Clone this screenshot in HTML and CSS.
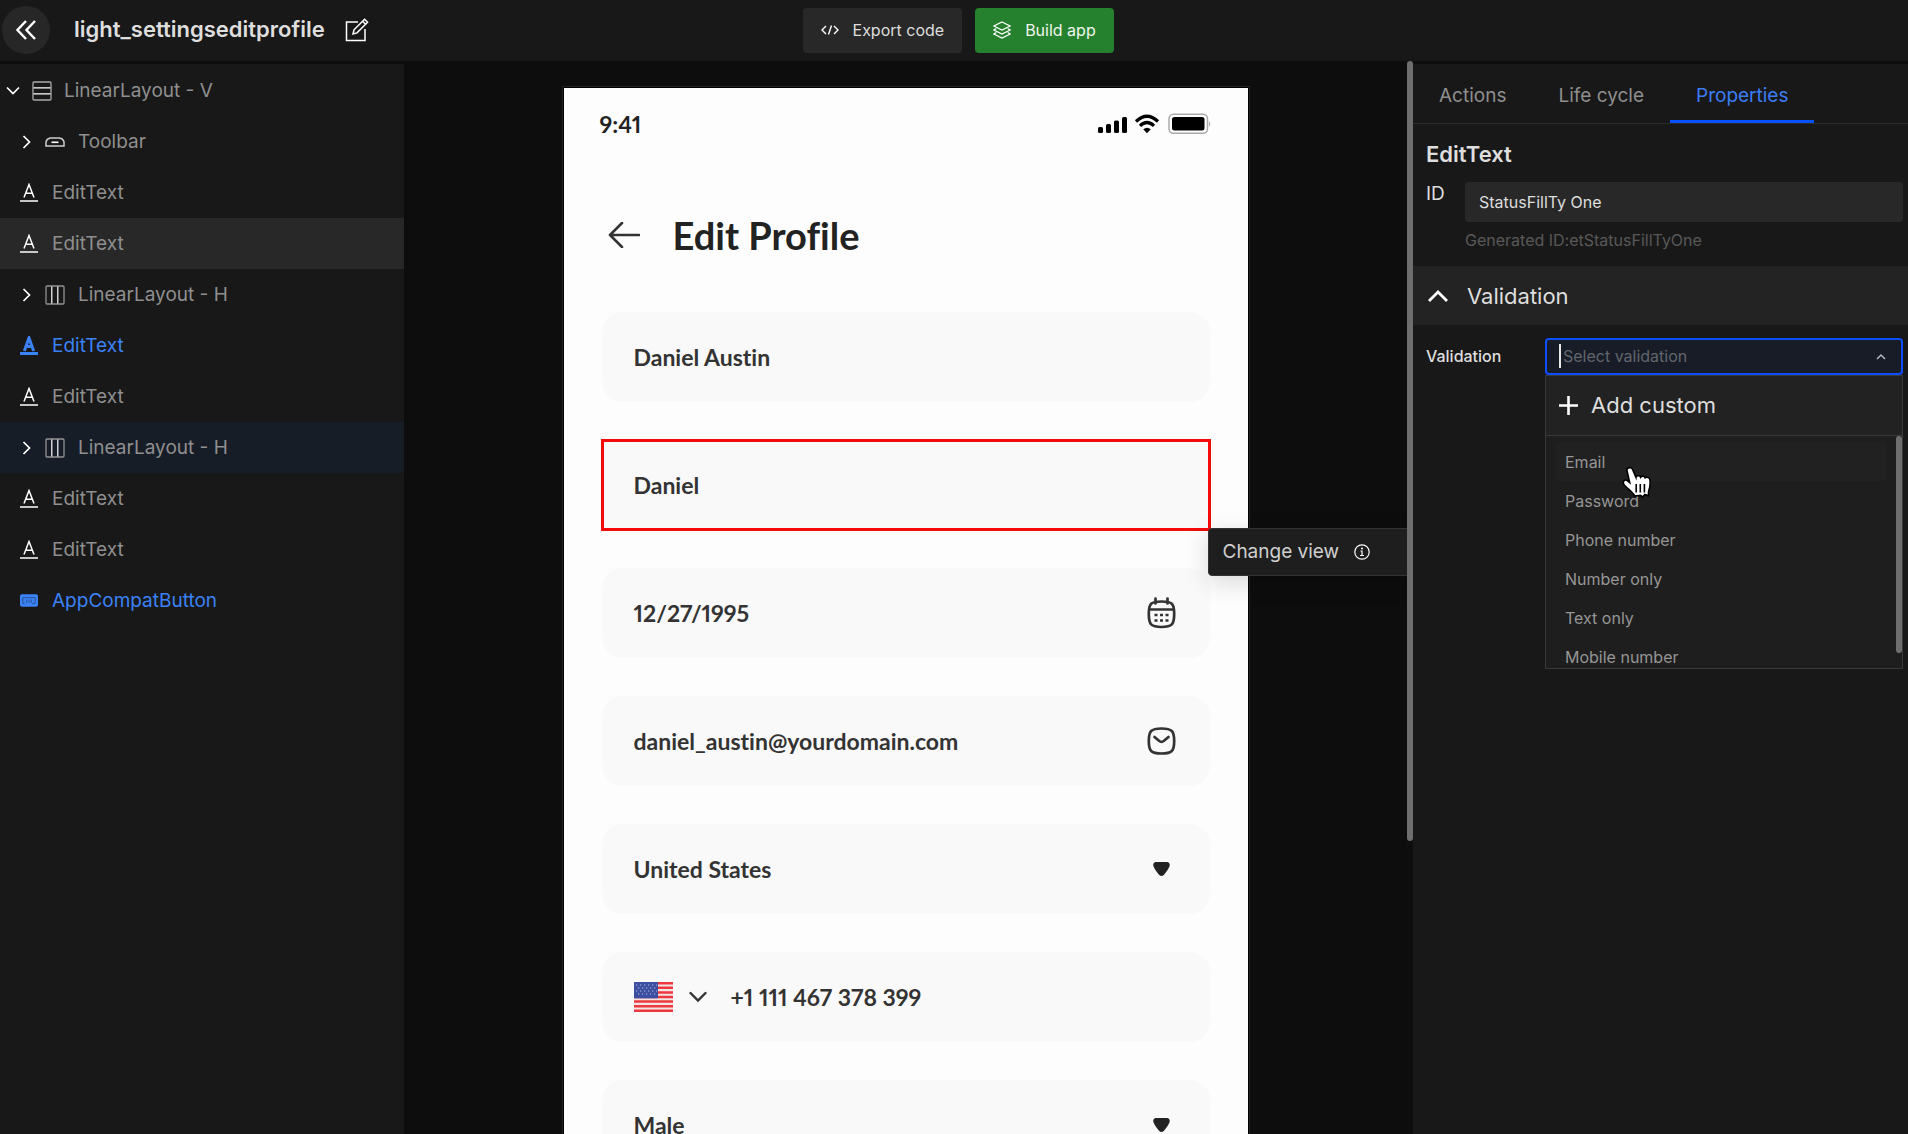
FILE: index.html
```html
<!DOCTYPE html>
<html lang="en">
<head>
<meta charset="utf-8">
<meta name="viewport" content="width=device-width, initial-scale=1">
<title>light_settingseditprofile</title>
<link rel="stylesheet" href="styles.css">
</head>
<body class="app">
<svg class="sprite" width="0" height="0" aria-hidden="true">
  <symbol id="i-text" viewBox="0 0 18 20"><path d="M4 14.500 9 1.500l5 13M5.800 10.200h6.400" fill="none" stroke="currentColor" stroke-width="1.500"/><path d="M0 18h18" stroke="currentColor" stroke-width="1.500"/></symbol>
  <symbol id="i-text-bold" viewBox="0 0 18 20"><path d="M4.300 15 9 2l4.700 13M6 10.500h6" fill="none" stroke="currentColor" stroke-width="3"/><path d="M0 17.500h19" stroke="currentColor" stroke-width="3"/></symbol>
  <symbol id="i-cols" viewBox="0 0 20 20"><rect x="1" y="1" width="18" height="18" rx="1" fill="none" stroke="#929292" stroke-width="1.300"/><path d="M6.800 1.500v17M12.800 1.500v17" stroke="#fff" stroke-width="1.200"/></symbol>
  <symbol id="i-right" viewBox="0 0 10 14"><path d="M1.500 1 7.500 7l-6 6" fill="none" stroke="#fff" stroke-width="1.700"/></symbol>
  <symbol id="i-triangle" viewBox="0 0 17 14"><path d="M3 0h11c2.400 0 3.300 2.600 2.400 4.600-1.300 3-3.200 5.800-5.400 8.200-1.500 1.600-3.500 1.600-5 0C3.800 10.400 1.900 7.600.6 4.600-.3 2.600.6 0 3 0Z" fill="#222"/></symbol>
</svg>

<header class="topbar">
  <div class="topbar-left">
    <button class="back" aria-label="Back"><svg width="20" height="20" viewBox="0 0 20 20"><path d="M10 1 1.500 10l8.500 9M19 1l-8.500 9 8.500 9" fill="none" stroke="#fff" stroke-width="2.400"/></svg></button>
    <h1 class="title">light_settingseditprofile</h1>
    <button class="plain" aria-label="Rename"><svg width="24" height="24" viewBox="0 0 24 24" fill="none" stroke="#fff" stroke-width="1.500"><path d="M13 4H1.500v18.500H20V11"/><path d="m8 16 1-4.200L19.600 1.200l3 3L12 14.900 8 16ZM17.600 3.200l3 3"/></svg></button>
  </div>
  <div class="topbar-actions">
    <button class="btn"><svg width="18" height="18" viewBox="0 0 18 18" fill="none" stroke="#fff" stroke-width="1.400"><path d="M5 5 1 9l4 4M13 5l4 4-4 4M10.500 4.500l-3 9"/></svg>Export code</button>
    <button class="btn btn-primary"><svg width="18" height="18" viewBox="0 0 18 18" fill="none" stroke="#fff" stroke-width="1.300"><path d="M9 1 17.200 5 9 9 .8 5 9 1Z"/><path d="M3.300 7.500.8 9 9 13l8.200-4-2.500-1.500M3.300 11.500.8 13 9 17l8.200-4-2.500-1.500"/></svg>Build app</button>
  </div>
</header>

<main class="workspace">
  <nav class="sidebar" aria-label="Layers">
    <ul class="tree">
      <li><button class="node root"><svg width="14" height="10" viewBox="0 0 14 10"><path d="m1 1.500 6 6 6-6" fill="none" stroke="#fff" stroke-width="1.700"/></svg><svg width="20" height="20" viewBox="0 0 20 20"><rect x="1" y="1" width="18" height="18" rx="1" fill="none" stroke="#aaa" stroke-width="1.300"/><path d="M1.500 6.800h17M1.500 12.800h17" stroke="#fff" stroke-width="1.200"/></svg>LinearLayout - V</button></li>
      <li><button class="node branch"><svg width="10" height="14"><use href="#i-right"/></svg><svg width="20" height="10" viewBox="0 0 20 10"><path d="M1 9h18V4.800Q18 1.500 14.500 1h-9Q2 1.500 1 4.800Z" fill="none" stroke="#ccc" stroke-width="1.500"/><path d="M6.500 5.300h7" stroke="#fff" stroke-width="1.600"/></svg>Toolbar</button></li>
      <li><button class="node leaf"><svg width="18" height="20"><use href="#i-text"/></svg>EditText</button></li>
      <li><button class="node leaf hovered"><svg width="18" height="20"><use href="#i-text"/></svg>EditText</button></li>
      <li><button class="node branch"><svg width="10" height="14"><use href="#i-right"/></svg><svg width="20" height="20"><use href="#i-cols"/></svg>LinearLayout - H</button></li>
      <li><button class="node leaf linked"><svg width="18" height="20"><use href="#i-text-bold"/></svg>EditText</button></li>
      <li><button class="node leaf"><svg width="18" height="20"><use href="#i-text"/></svg>EditText</button></li>
      <li><button class="node branch active"><svg width="10" height="14"><use href="#i-right"/></svg><svg width="20" height="20"><use href="#i-cols"/></svg>LinearLayout - H</button></li>
      <li><button class="node leaf"><svg width="18" height="20"><use href="#i-text"/></svg>EditText</button></li>
      <li><button class="node leaf"><svg width="18" height="20"><use href="#i-text"/></svg>EditText</button></li>
      <li><button class="node leaf linked"><svg width="18" height="13" viewBox="0 0 19 13"><rect width="19" height="13" rx="2" fill="#3b82f6"/><path d="M3 9.500v-6h13v6h-3M3 9.500h2M7 9V5.500M9.500 9V5.500M12 9V5.500" fill="none" stroke="#27508f"/></svg>AppCompatButton</button></li>
    </ul>
  </nav>

  <section class="canvas" aria-label="Preview">
    <div class="stage">
      <div class="phone">
        <div class="statusbar">
          <span class="clock">9:41</span>
          <svg width="114" height="22" viewBox="0 0 114 22">
            <rect x="0" y="14" width="5" height="6" rx="1.500"/><rect x="8" y="11" width="5" height="9" rx="1.500"/><rect x="16" y="7.500" width="5" height="12.500" rx="1.500"/><rect x="24" y="4" width="5" height="16" rx="1.500"/>
            <g fill="none" stroke="#000" stroke-width="3.200"><path d="M38 8.500q11-10.500 22 0M42 12.800q7-6.500 14 0"/></g><path d="M45.200 16.200q3.800-3 7.600 0L49 20.200Z"/>
            <rect x="71" y="1.200" width="38.500" height="19" rx="4.500" fill="none" stroke="#aaa" stroke-width="1.500"/><rect x="74" y="4" width="32.500" height="13.600" rx="2.500"/><path d="M111 8q2.500 3 0 6Z" fill="#aaa"/>
          </svg>
        </div>
        <div class="phone-head">
          <svg width="32" height="26" viewBox="0 0 32 26"><path d="M31 13H2M14 1 2 13l12 12" fill="none" stroke="#333" stroke-width="2.600" stroke-linecap="round" stroke-linejoin="round"/></svg>
          <h2 class="phone-title">Edit Profile</h2>
        </div>
        <div class="form">
          <div class="card"><span>Daniel Austin</span></div>
          <div class="card selected"><span>Daniel</span>
            <button class="tooltip">Change view<svg width="16" height="16" viewBox="0 0 16 16"><circle cx="8" cy="8" r="7.200" fill="none" stroke="#fff" stroke-width="1.200"/><path d="M6.500 7H8v4.500M6 11.500h4" fill="none" stroke="#fff" stroke-width="1.200"/><circle cx="8" cy="4.500" r="1" fill="#fff"/></svg></button>
          </div>
          <div class="card"><span>12/27/1995</span>
            <svg width="29" height="32" viewBox="0 0 29 32" fill="none" stroke="#333" stroke-width="2.700"><path d="M1.800 17C1.800 6.500 4 4.500 14.500 4.500S27.200 6.500 27.200 17 25 30 14.500 30 1.800 27.500 1.800 17ZM2.500 12.500h24"/><path d="M8.500 1.500v5M20.500 1.500v5" stroke-linecap="round"/><path d="M7.500 18h3M13 18h3M18.500 18h3M7.500 23.500h3M13 23.500h3M18.500 23.500h3"/></svg></div>
          <div class="card"><span>daniel_austin@yourdomain.com</span>
            <svg width="29" height="28" viewBox="0 0 29 28" fill="none" stroke="#333" stroke-width="2.700" stroke-linecap="round"><path d="M1.800 14C1.800 4 4 1.500 14.500 1.500S27.200 4 27.200 14 25 26.500 14.500 26.500 1.800 24 1.800 14Z"/><path d="m7.500 10 4.800 4q2.200 1.600 4.400 0l4.800-4"/></svg></div>
          <div class="card"><span>United States</span><svg class="caret-down" width="17" height="14"><use href="#i-triangle"/></svg></div>
          <div class="card phone-number">
            <svg width="39" height="30" viewBox="0 0 39 30"><rect width="39" height="30" fill="#f3e4e6"/><path d="M0 1.200h39M0 5.800h39M0 10.400h39M0 15h39M0 19.600h39M0 24.200h39M0 28.800h39" stroke="#ee3840" stroke-width="2.500"/><rect width="24" height="16.300" fill="#3d4fa0"/><path d="M2 3h21M4 6h19M2 9h21M4 12h19" stroke="#b4bce0" stroke-dasharray="1.300 2.700"/></svg>
            <svg width="18" height="12" viewBox="0 0 18 12"><path d="m1.500 2 7.500 7.500L16.500 2" fill="none" stroke="#333" stroke-width="2.400" stroke-linecap="round"/></svg>
            <span>+1 111 467 378 399</span></div>
          <div class="card"><span>Male</span><svg class="caret-down" width="17" height="14"><use href="#i-triangle"/></svg></div>
        </div>
      </div>
    </div>
    <div class="scroll-track"><div class="scroll-thumb"></div></div>
  </section>

  <aside class="panel">
    <div class="tabs" role="tablist">
      <button class="tab" role="tab">Actions</button>
      <button class="tab" role="tab">Life cycle</button>
      <button class="tab current" role="tab" aria-selected="true">Properties</button>
    </div>
    <section class="identity">
      <h2 class="panel-title">EditText</h2>
      <div class="id-row">
        <label class="id-label" for="view-id">ID</label>
        <div class="id-field">
          <input class="id-input" id="view-id" type="text" value="StatusFillTy One">
          <p class="hint">Generated ID:etStatusFillTyOne</p>
        </div>
      </div>
    </section>
    <button class="section-head" aria-expanded="true"><svg width="20" height="12" viewBox="0 0 20 12"><path d="m1 11 9-9 9 9" fill="none" stroke="#fff" stroke-width="2.800"/></svg>Validation</button>
    <div class="validation-row">
      <label class="validation-label" for="validation">Validation</label>
      <div class="combo">
        <input class="combo-input" id="validation" type="text" role="combobox" aria-expanded="true" aria-controls="options" placeholder="Select validation">
        <span class="combo-caret"></span>
        <svg class="combo-arrow" width="10" height="7" viewBox="0 0 10 7"><path d="m1 6 4-4 4 4" fill="none" stroke="#b4b8be" stroke-width="1.500"/></svg>
        <div class="menu">
          <button class="add"><svg width="19" height="19" viewBox="0 0 19 19"><path d="M9.500 0v19M0 9.500h19" stroke="#fff" stroke-width="2.600"/></svg>Add custom</button>
          <div class="menu-body">
            <ul class="options" id="options" role="listbox">
              <li class="option focused" role="option">Email</li>
              <li class="option" role="option">Password</li>
              <li class="option" role="option">Phone number</li>
              <li class="option" role="option">Number only</li>
              <li class="option" role="option">Text only</li>
              <li class="option" role="option">Mobile number</li>
            </ul>
            <div class="menu-thumb"></div>
          </div>
          <svg class="pointer" width="30" height="34" viewBox="0 0 30 34"><path d="M6.500 2C8.300 1 10 2 10.700 3.800L14 11.500c.3-2.400 3.800-2.600 4.600-.3 1.200-1.700 3.900-1.400 4.500.6 1.900-1.200 4.700 0 4.900 2.300.4 4.300.2 7.700-1.500 11.400v4.300l-3.600-1.400-2.300 2.700-1.900-1.700-5.900.6c-2.500-4.200-6.500-6.700-10.300-10.700-2.600-3-.4-6.200 2.500-4.900l2.700 2.200L5 4.800C4.700 3.600 5.300 2.500 6.500 2Z" fill="#fff" stroke="#000" stroke-width="1.600"/><path d="M14.200 18v8.500M18.300 18v8.500M22.400 18v8.500" stroke="#000" stroke-width="1.600"/></svg>
        </div>
      </div>
    </div>
  </aside>
</main>
</body>
</html>
```

FILE: styles.css
```css
* { box-sizing: border-box; }

.app {
  display: flex;
  flex-direction: column;
  height: 100vh;
  margin: 0;
  overflow: hidden;
  background: #0e0e0e;
  color: #dedede;
  font: 16px/24px Inter, "Liberation Sans", sans-serif;
}

.sprite { position: absolute; }
svg { flex: none; display: block; }
h1, h2, p, ul { margin: 0; padding: 0; }
ul { list-style: none; }

button {
  margin: 0;
  padding: 0;
  border: 0;
  background: none;
  color: inherit;
  font: inherit;
}

input { font: inherit; outline: 0; }

/* Top bar */
.topbar {
  display: grid;
  grid-template-columns: 42% auto 1fr;
  align-items: center;
  flex: none;
  height: 61px;
  padding: 0 0 1px 2px;
  background: #181818;
}
.topbar-left { display: flex; align-items: center; }
.back {
  display: grid;
  place-items: center;
  width: 48px;
  height: 48px;
  border-radius: 50%;
  background: #272727;
}
.title {
  margin: 0 20px 2px 24px;
  font-size: 22px;
  font-weight: 600;
  line-height: 30px;
}
.topbar-actions { display: flex; gap: 13px; }
.btn {
  display: flex;
  align-items: center;
  gap: 14px;
  height: 45px;
  padding: 0 18px;
  border-radius: 4px;
  background: #282828;
}
.btn-primary { background: #25812d; color: #f0f5f0; }

/* Workspace */
.workspace { display: flex; flex: 1; min-height: 0; }

.sidebar {
  flex: none;
  width: 404px;
  margin-top: 3px;
  background: #181818;
}
.tree { padding-top: 1px; }
.node {
  display: flex;
  align-items: center;
  width: 100%;
  height: 51px;
  color: #8f8f8f;
  font-size: 19px;
}
.root { gap: 12px; padding-left: 6px; }
.branch { gap: 13px; padding-left: 22px; }
.leaf { gap: 14px; padding-left: 20px; }
.node.leaf > svg { color: #fff; }
.hovered { background: #282828; }
.active { background: #171d27; }
.linked, .node.linked > svg { color: #3b82f6; }

/* Preview canvas */
.canvas { display: flex; flex: 1; min-width: 0; }
.stage {
  display: flex;
  justify-content: center;
  flex: 1;
  min-width: 0;
  overflow: hidden;
  padding-top: 25px;
  background: #0d0d0d;
}
.phone {
  width: 688px;
  height: max-content;
  padding: 0 37px;
  border: 1px solid #222;
  background: #fdfdfd;
  box-shadow: inset 0 0 0 1px #000;
  color: #333;
  font-family: Lato, "Open Sans", sans-serif;
  font-weight: 700;
  font-variant-ligatures: none;
  font-variant-numeric: proportional-nums;
}
.statusbar {
  display: flex;
  align-items: center;
  justify-content: space-between;
  height: 74px;
}
.clock { color: #222; font-size: 23px; }
.phone-head {
  display: flex;
  align-items: center;
  gap: 33px;
  height: 151px;
  padding: 0 0 4px 8px;
}
.phone-title {
  color: #222;
  font-size: 38px;
  font-weight: 700;
  line-height: 44px;
}
.form { display: grid; gap: 38px; padding: 0 2px; }
.card {
  position: relative;
  display: flex;
  align-items: center;
  justify-content: space-between;
  height: 90px;
  padding: 0 34px 0 32px;
  border-radius: 20px;
  background: #f9f9f9;
  font-size: 23px;
}
.caret-down { margin-right: 6px; }
.phone-number { justify-content: flex-start; gap: 16px; }
.phone-number > span { margin-left: 8px; }
.selected {
  z-index: 1;
  border-radius: 0;
  outline: 3px solid #f30a0a;
  outline-offset: -2px;
}
.tooltip {
  position: absolute;
  top: calc(100% - 2px);
  left: calc(100% - 2px);
  display: flex;
  align-items: center;
  gap: 15px;
  width: 220px;
  height: 48px;
  padding: 0 14px;
  border: 1px solid #333;
  border-radius: 4px;
  background: #1e1e1e;
  box-shadow: 0 6px 24px rgba(0, 0, 0, 0.15);
  color: #d0d0d0;
  font: 400 19px/24px Inter, "Liberation Sans", sans-serif;
}
.scroll-track { flex: none; width: 6px; }
.scroll-thumb {
  height: calc(73% - 3px);
  border-radius: 3px;
  background: #6e6e6e;
}

/* Properties panel */
.panel {
  flex: none;
  width: 495px;
  margin-top: 3px;
  background: #181818;
}
.tabs {
  display: flex;
  height: 60px;
  border-bottom: 1px solid #2b2b2b;
}
.tab {
  padding: 7px 26px 0;
  border-bottom: 3px solid transparent;
  color: #8f8f8f;
  font-size: 19px;
}
.current { border-color: #0551ff; color: #3b7df5; }
.identity { padding: 16px 5px 12px 13px; height: 142px; }
.panel-title { font-size: 22px; font-weight: 600; line-height: 28px; }
.id-row { display: flex; gap: 21px; padding-top: 14px; }
.id-label { width: 18px; font-size: 19px; }
.id-field { flex: 1; min-width: 0; }
.id-input {
  display: block;
  width: 100%;
  height: 40px;
  padding: 0 14px;
  border: 0;
  border-radius: 4px;
  background: #282828;
  color: #dedede;
}
.hint { padding-top: 6px; color: #585858; }
.section-head {
  display: flex;
  align-items: center;
  gap: 19px;
  width: 100%;
  height: 59px;
  padding: 0 15px;
  background: #232323;
  font-size: 22px;
}
.validation-row {
  display: flex;
  align-items: center;
  justify-content: space-between;
  padding: 13px 5px 0 13px;
}
.validation-label { padding-bottom: 2px; font-weight: 500; }
.combo { position: relative; width: 358px; }
.combo-input {
  display: block;
  width: 100%;
  height: 37px;
  padding: 0 16px 2px;
  border: 2px solid #0b4fff;
  border-radius: 4px;
  background: #171c27;
  color: #dedede;
}
.combo-input::placeholder { color: #62666c; opacity: 1; }
.combo-caret {
  position: absolute;
  top: 6px;
  left: 14px;
  width: 2px;
  height: 24px;
  background: #e8e8e8;
}
.combo-arrow { position: absolute; top: 15px; right: 17px; }
.menu {
  position: absolute;
  top: 100%;
  right: 0;
  left: 0;
  border: 1px solid #383838;
  background: #1e1e1e;
}
.add {
  display: flex;
  align-items: center;
  gap: 13px;
  width: 100%;
  height: 60px;
  padding: 0 13px 1px;
  border-bottom: 1px solid #383838;
  background: #222;
  font-size: 22px;
}
.menu-body {
  display: flex;
  justify-content: space-between;
  height: 232px;
  overflow: hidden;
}
.options { flex: 1; padding: 6px 9px 0 10px; }
.option {
  height: 39px;
  padding: 0 9px;
  border-radius: 4px;
  color: #969696;
  line-height: 41px;
}
.focused { background: #212121; }
.menu-thumb {
  width: 6px;
  height: 217px;
  border-radius: 3px;
  background: #6e6e6e;
}
.pointer { position: absolute; top: 90px; left: 76px; }
```
